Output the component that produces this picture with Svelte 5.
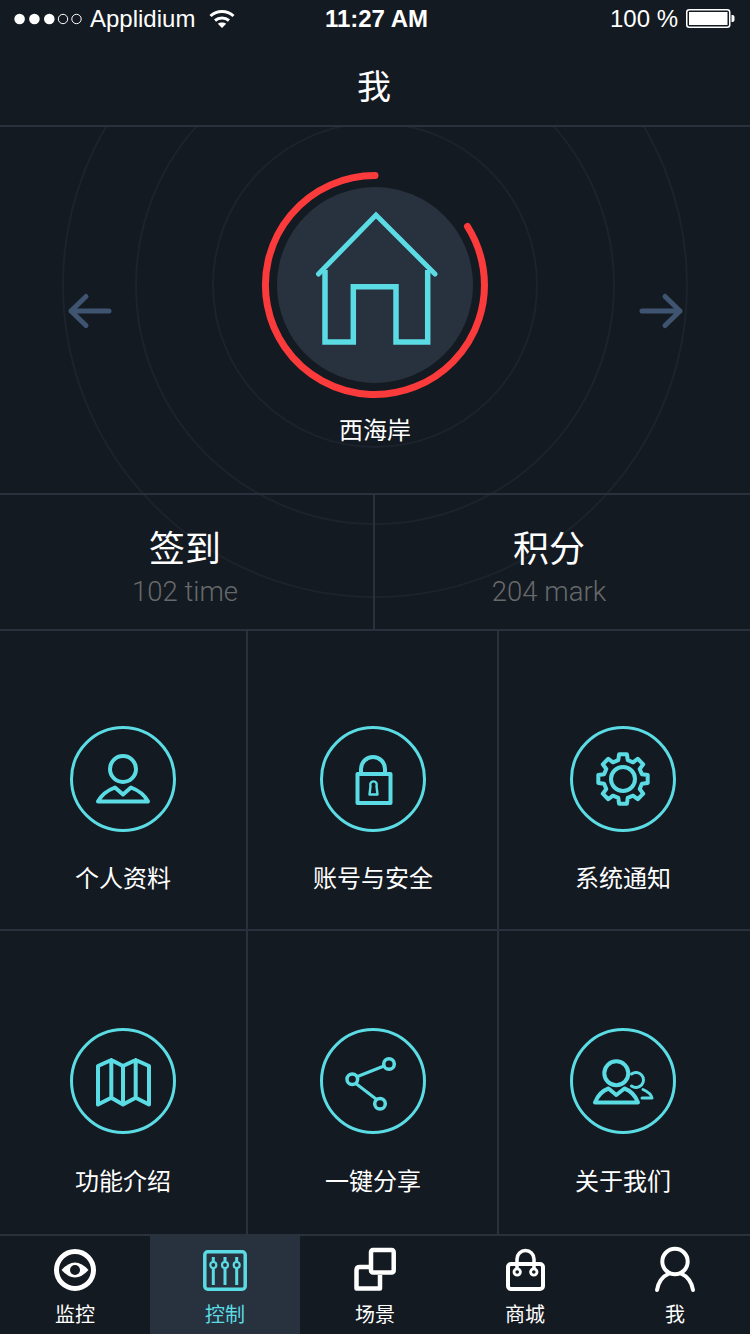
<script lang="ts">
  const cells = [
    { icon: 'person', label: '个人资料' },
    { icon: 'lock', label: '账号与安全' },
    { icon: 'gear', label: '系统通知' },
    { icon: 'map', label: '功能介绍' },
    { icon: 'share', label: '一键分享' },
    { icon: 'about', label: '关于我们' }
  ];

  const tabs = [
    { icon: 'eye', label: '监控' },
    { icon: 'sliders', label: '控制', active: true },
    { icon: 'scene', label: '场景' },
    { icon: 'bag', label: '商城' },
    { icon: 'me', label: '我' }
  ];

  function gearPath(teeth: number, outer: number, root: number) {
    const step = (Math.PI * 2) / teeth;
    const pts: string[] = [];
    for (let i = 0; i < teeth; i++) {
      const a = -Math.PI / 2 + i * step;
      const offsets: [number, number][] = [
        [-0.31, root],
        [-0.2, outer],
        [0.2, outer],
        [0.31, root]
      ];
      for (const [o, r] of offsets) {
        const t = a + o * step;
        pts.push(`${(Math.cos(t) * r).toFixed(2)} ${(Math.sin(t) * r).toFixed(2)}`);
      }
    }
    return 'M' + pts.join('L') + 'Z';
  }

  const gear = gearPath(8, 25, 19.5);
</script>

<div class="screen">
  <div class="status">
    <div class="status-left">
      <svg class="signal" width="70" height="20" viewBox="0 0 70 20">
        <circle cx="5.6" cy="10" r="5.3" fill="#fff" />
        <circle cx="20.4" cy="10" r="5.3" fill="#fff" />
        <circle cx="35.3" cy="10" r="5.3" fill="#fff" />
        <circle cx="49" cy="10" r="4.7" fill="none" stroke="#fff" />
        <circle cx="62.5" cy="10" r="4.7" fill="none" stroke="#fff" />
      </svg>
      <span>Applidium</span>
      <svg class="wifi" width="26" height="20" viewBox="0 0 26 20" fill="none" stroke="#fff" stroke-width="3">
        <path d="M1.5 7 C8 1 18 1 24.500 7" />
        <path d="M6 11.500 C10 8 16 8 20 11.500" />
        <path d="M13 19 L8.800 14.800 C11 13 15 13 17.200 14.800 Z" fill="#fff" stroke="none" />
      </svg>
    </div>
    <div class="time">11:27 AM</div>
    <div class="status-right">
      <span>100 %</span>
      <svg width="49" height="20" viewBox="0 0 49 20">
        <rect x="0.750" y="0.750" width="43" height="17.500" rx="2.500" fill="none" stroke="#fff" stroke-width="1.500" />
        <rect x="3" y="3" width="38.500" height="13" fill="#fff" />
        <path d="M45.500 6 H46.500 Q48.500 6 48.500 8 V11 Q48.500 13 46.500 13 H45.500 Z" fill="#fff" />
      </svg>
    </div>
  </div>

  <div class="title">我</div>

  <div class="top">
    <svg class="rings" width="750" height="504" viewBox="0 0 750 504" fill="none" stroke="#1c232c" stroke-width="2">
      <circle cx="375" cy="158" r="162" />
      <circle cx="375" cy="158" r="239" />
      <circle cx="375" cy="158" r="312" />
    </svg>

    <div class="hero">
      <div class="hero-row">
        <svg class="arrow left" width="50" height="40" viewBox="0 0 50 40" fill="none" stroke="#3f5470" stroke-width="5" stroke-linecap="round" stroke-linejoin="round">
          <path d="M7 20 H45 M22 5.500 L7 20 L22 34.500" />
        </svg>
        <svg width="230" height="230" viewBox="0 0 230 230" fill="none">
          <circle cx="115" cy="115" r="98" fill="#28313e" />
          <path d="M115 5.500 A109.500 109.500 0 1 0 207.500 56.500" stroke="#fb3b3b" stroke-width="7" stroke-linecap="round" />
          <path d="M58.500 104 L116 45 L175 104" stroke="#5bdbe3" stroke-width="5" stroke-linecap="round" stroke-linejoin="miter" />
          <path d="M65 100 V172 H93.300 V116.700 H136 V172 H167.700 V100" stroke="#5bdbe3" stroke-width="5.500" />
        </svg>
        <svg class="arrow right" width="50" height="40" viewBox="0 0 50 40" fill="none" stroke="#3f5470" stroke-width="5" stroke-linecap="round" stroke-linejoin="round">
          <path d="M43 20 H5 M28 5.500 L43 20 L28 34.500" />
        </svg>
      </div>
      <div class="hero-label">西海岸</div>
    </div>

    <div class="stats">
      <div class="stat">
        <div class="stat-name">签到</div>
        <div class="stat-value">102 time</div>
      </div>
      <div class="stat second">
        <div class="stat-name">积分</div>
        <div class="stat-value">204 mark</div>
      </div>
    </div>
  </div>

  <div class="grid">
    {#each cells as c, i}
      <div class="cell" class:lower={i > 2}>
        <svg width="120" height="120" viewBox="-60 -60 120 120" fill="none" stroke="#5bdbe3" stroke-width="4" stroke-linejoin="round" stroke-linecap="round">
          <circle r="51.500" stroke-width="3" />
          {#if c.icon === 'person'}
            <circle cy="-10" r="13" />
            <path d="M-25 22.500 Q-20 13 -8 8.500 L0 15.500 L8 8.500 Q20 13 25 22.500 Z" />
          {:else if c.icon === 'lock'}
            <path d="M-12 -5 V-10 A12 12 0 0 1 12 -10 V-5" />
            <rect x="-15.500" y="-5" width="33" height="29" />
            <path d="M-2.500 7 A3.300 3.300 0 1 1 3.500 7 L4.500 15.500 H-3.500 Z" stroke-width="2.400" />
          {:else if c.icon === 'gear'}
            <path d={gear} />
            <circle r="12" />
          {:else if c.icon === 'map'}
            <path d="M-25 -15 L-11.700 -21 L0 -15 L12.700 -21 L26 -15 V23.500 L12.700 16.700 L0 23.500 L-11.700 16.700 L-25 23.500 Z M-11.700 -21 V16.700 M0 -15 V23.500 M12.700 -21 V16.700" />
          {:else if c.icon === 'share'}
            <path d="M-15.500 -4.500 L11 -15 M-16.500 3 L3 18" stroke-width="3" />
            <circle cx="-20.700" cy="-1.700" r="5.300" stroke-width="3.500" />
            <circle cx="16" cy="-17" r="5.300" stroke-width="3.500" />
            <circle cx="7" cy="22.700" r="5.300" stroke-width="3.500" />
          {:else if c.icon === 'about'}
            <circle cx="-6.700" cy="-7.700" r="12" />
            <path d="M-28 21.500 Q-24 11 -14.500 7.500 L-6.700 14 L1.500 7.500 Q11 11 15 21.500 Z" />
            <path d="M8.500 -7 A7.500 7.500 0 1 1 8.500 5" stroke-width="3" />
            <path d="M20 8.500 Q28 12 29 17 H19" stroke-width="3" />
          {/if}
        </svg>
        <div class="cell-label">{c.label}</div>
      </div>
    {/each}
  </div>

  <div class="tabs">
    {#each tabs as t}
      <div class="tab" class:active={t.active}>
        <svg width="60" height="50" viewBox="-30 -25 60 50" fill="none" stroke="currentColor" stroke-width="4.500" stroke-linejoin="round">
          {#if t.icon === 'eye'}
            <circle r="18.500" stroke-width="5" />
            <path d="M-13.500 0 Q0 -15 13.500 0 Q0 15 -13.500 0 Z" fill="currentColor" stroke="none" />
            <circle r="5" fill="#141a21" stroke="none" />
          {:else if t.icon === 'sliders'}
            <rect x="-20.200" y="-18.200" width="40.400" height="37.400" rx="3" stroke-width="3.500" />
            <path d="M-11.700 -13 V15 M0 -13 V15 M11.700 -13 V15" stroke-width="3" />
            <circle cx="-11.700" cy="-5" r="3" fill="#28313e" stroke-width="2.200" />
            <circle cy="-5" r="3" fill="#28313e" stroke-width="2.200" />
            <circle cx="11.700" cy="-5" r="3" fill="#28313e" stroke-width="2.200" />
          {:else if t.icon === 'scene'}
            <rect x="-4" y="-20" width="22.700" height="22.500" rx="2" />
            <path d="M-6 -3 H-15 Q-18.500 -3 -18.500 0 V18.500 H5 V5" />
          {:else if t.icon === 'bag'}
            <rect x="-17" y="-6" width="35" height="25" rx="3" stroke-width="4" />
            <path d="M-8 -2 V-11 A8.500 8.500 0 0 1 9 -11 V-2" stroke-width="3.500" />
            <circle cx="-7.800" cy="2" r="3.200" fill="#141a21" stroke-width="2.800" />
            <circle cx="8.800" cy="2" r="3.200" fill="#141a21" stroke-width="2.800" />
          {:else if t.icon === 'me'}
            <circle cy="-8.500" r="12.700" stroke-width="4" />
            <path d="M-18 20 Q-16 8 -6 3.500 M18 20 Q16 8 6 3.500" stroke-width="4" stroke-linecap="round" />
          {/if}
        </svg>
        <div class="tab-label">{t.label}</div>
      </div>
    {/each}
  </div>
</div>

<style>
  :global(body) {
    background: #141a21;
  }

  .screen {
    width: 750px;
    height: 1334px;
    overflow: hidden;
    background: #141a21;
    color: #fff;
    display: flex;
    flex-direction: column;
    font-family: 'Noto Sans CJK SC', 'Liberation Sans', sans-serif;
  }

  .status {
    height: 38px;
    display: grid;
    grid-template-columns: 1fr auto 1fr;
    align-items: center;
    font-family: 'Liberation Sans', sans-serif;
    font-size: 24px;
    line-height: 38px;
  }

  .status-left {
    display: flex;
    align-items: center;
    padding-left: 14px;
  }

  .status-left span {
    margin-left: 6px;
  }

  .wifi {
    margin-left: 14px;
  }

  .time {
    font-weight: 700;
    padding-left: 3px;
  }

  .status-right {
    display: flex;
    align-items: center;
    justify-content: flex-end;
    gap: 8px;
    padding-right: 15px;
  }

  .title {
    height: 87px;
    border-bottom: 2px solid #29313d;
    text-align: center;
    font-size: 34px;
    line-height: 94px;
    padding-right: 2px;
  }

  .top {
    position: relative;
    overflow: hidden;
  }

  .rings {
    position: absolute;
    top: 0;
    left: 0;
  }

  .hero {
    position: relative;
    height: 366px;
    border-bottom: 2px solid #29313d;
  }

  .hero-row {
    display: flex;
    align-items: flex-start;
    padding: 43px 0 0 64px;
  }

  .arrow {
    margin-top: 121px;
  }

  .arrow.left {
    margin-right: 146px;
  }

  .arrow.right {
    margin-left: 147px;
  }

  .hero-label {
    margin-top: 14px;
    text-align: center;
    font-size: 24px;
    line-height: 30px;
  }

  .stats {
    position: relative;
    display: grid;
    grid-template-columns: 373px 1fr;
    height: 134px;
  }

  .stat {
    text-align: center;
    padding-top: 24px;
    padding-right: 3px;
  }

  .stat.second {
    border-left: 2px solid #29313d;
    padding-right: 27px;
  }

  .stat-name {
    font-size: 36px;
    line-height: 54px;
  }

  .stat-value {
    margin-top: 4px;
    color: #66696b;
    font-family: Roboto, 'Liberation Sans', sans-serif;
    font-weight: 300;
    font-size: 27.500px;
    line-height: 30px;
  }

  .grid {
    display: grid;
    grid-template-columns: 246px 251px 253px;
    grid-template-rows: 300px 305px;
    border-top: 2px solid #29313d;
  }

  .cell {
    display: flex;
    flex-direction: column;
    align-items: center;
    padding-top: 88px;
    border-bottom: 2px solid #29313d;
    border-left: 2px solid #29313d;
  }

  .cell:nth-child(3n + 1) {
    border-left: none;
  }

  .cell:nth-child(3n + 2) {
    padding-left: 1px;
  }

  .cell:nth-child(3n) {
    padding-right: 3px;
  }

  .cell.lower {
    padding-top: 90px;
  }

  .cell-label {
    margin-top: 23px;
    font-size: 24px;
    line-height: 30px;
  }

  .cell.lower .cell-label {
    margin-top: 24px;
  }

  .tabs {
    display: grid;
    grid-template-columns: repeat(5, 150px);
    flex: 1;
    min-height: 0;
  }

  .tab {
    display: flex;
    flex-direction: column;
    align-items: center;
    padding-top: 9px;
  }

  .tab.active {
    background: #28313e;
    color: #5bdbe3;
  }

  .tab-label {
    margin-top: 7px;
    font-size: 20px;
    line-height: 24px;
  }
</style>
